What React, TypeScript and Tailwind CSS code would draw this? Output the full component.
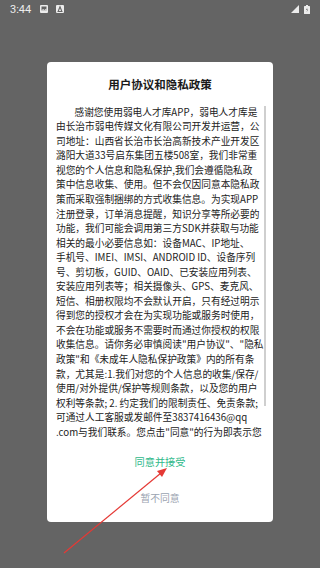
import React from "react";

const lines = [
  "感谢您使用弱电人才库APP，弱电人才库是",
  "由长治市弱电传媒文化有限公司开发并运营，公",
  "司地址：山西省长治市长治高新技术产业开发区",
  "潞阳大道33号启东集团五楼508室，我们非常重",
  "视您的个人信息和隐私保护,我们会遵循隐私政",
  "策中信息收集、使用。但不会仅因同意本隐私政",
  "策而采取强制捆绑的方式收集信息。为实现APP",
  "注册登录，订单消息提醒，知识分享等所必要的",
  "功能，我们可能会调用第三方SDK并获取与功能",
  "相关的最小必要信息如：设备MAC、IP地址、",
  "手机号、IMEI、IMSI、ANDROID ID、设备序列",
  "号、剪切板，GUID、OAID、已安装应用列表、",
  "安装应用列表等；相关摄像头、GPS、麦克风、",
  "短信、相册权限均不会默认开启，只有经过明示",
  "得到您的授权才会在为实现功能或服务时使用，",
  "不会在功能或服务不需要时而通过你授权的权限",
  "收集信息。请你务必审慎阅读\"用户协议\"、\"隐私",
  "政策\"和《未成年人隐私保护政策》内的所有条",
  "款，尤其是:1.我们对您的个人信息的收集/保存/",
  "使用/对外提供/保护等规则条款，以及您的用户",
  "权利等条款; 2. 约定我们的限制责任、免责条款;",
  "可通过人工客服或发邮件至3837416436@qq",
  ".com与我们联系。您点击\"同意\"的行为即表示您",
];

function StatusBar() {
  return (
    <div className="h-[18px] flex items-center px-[10px] text-[#ececec]">
      <span className="text-[11px] leading-none font-['Roboto',sans-serif]">3:44</span>
      <svg width="8" height="8" viewBox="0 0 8 8" className="ml-[9px]">
        <rect x="0" y="0" width="8" height="8" rx="1" fill="#ececec" />
        <rect x="1.5" y="1.5" width="5" height="4" fill="#646464" />
        <path d="M1.5 5.5 L3 4 L4.5 5 L6.5 3.5 L6.5 5.5 Z" fill="#ececec" />
      </svg>
      <svg width="8" height="8" viewBox="0 0 8 8" className="ml-[8px]">
        <rect x="0" y="0" width="8" height="8" rx="1" fill="#ececec" />
        <path d="M2.3 6 L4 1.8 L5.7 6" stroke="#646464" strokeWidth="1.1" fill="none" />
        <rect x="1.5" y="6" width="5" height="1" fill="#646464" />
      </svg>
      <div className="flex-1" />
      <svg width="8" height="8" viewBox="0 0 8 8">
        <path d="M8 0 L8 8 L0 8 Z" fill="#ececec" />
      </svg>
      <svg width="6" height="9" viewBox="0 0 6 9" className="ml-[5px]">
        <rect x="0" y="1" width="6" height="8" rx="0.6" fill="#ececec" />
        <rect x="2" y="0" width="2" height="1" fill="#ececec" />
        <path d="M3.4 2.5 L2 5 L3.2 5 L2.6 7.2 L4.1 4.4 L2.9 4.4 Z" fill="#646464" />
      </svg>
    </div>
  );
}

export default function App() {
  return (
    <div className="relative w-[320px] h-[568px] bg-[#646464] overflow-hidden font-['Noto_Sans_CJK_SC','Noto_Sans',sans-serif]">
      <StatusBar />
      <div className="ml-[47px] mt-[44px] w-[226px] h-[460px] bg-white rounded-[4px] flex flex-col items-center">
        <h1 className="pt-[14px] text-[11.5px] leading-[16px] font-semibold text-[#1a1a1a]">用户协议和隐私政策</h1>
        <div className="relative mt-[12.7px] h-[336px] w-full overflow-hidden">
          <div className="pl-[9px] text-[9.7px] leading-[14.55px] text-[#222]">
            {lines.map((l, i) => (
              <div key={i} className={i === 0 ? "whitespace-nowrap pl-[18.5px]" : "whitespace-nowrap"}>
                {l}
              </div>
            ))}
          </div>
          <div className="absolute right-[7px] top-[1px] w-[2.5px] h-[300px] bg-[#cfcfcf]" />
        </div>
        <button className="mt-[14px] text-[10.2px] leading-[14px] text-[#2fb98a]">同意并接受</button>
        <button className="mt-[22px] text-[9.8px] leading-[14px] text-[#9aa3b0]">暂不同意</button>
      </div>
      <svg className="absolute left-0 top-0 pointer-events-none" width="320" height="568">
        <line x1="64" y1="553" x2="161" y2="473" stroke="#e53935" strokeWidth="1.2" />
        <path d="M167 468 L157 471 L162 477 Z" fill="#e53935" />
      </svg>
    </div>
  );
}
